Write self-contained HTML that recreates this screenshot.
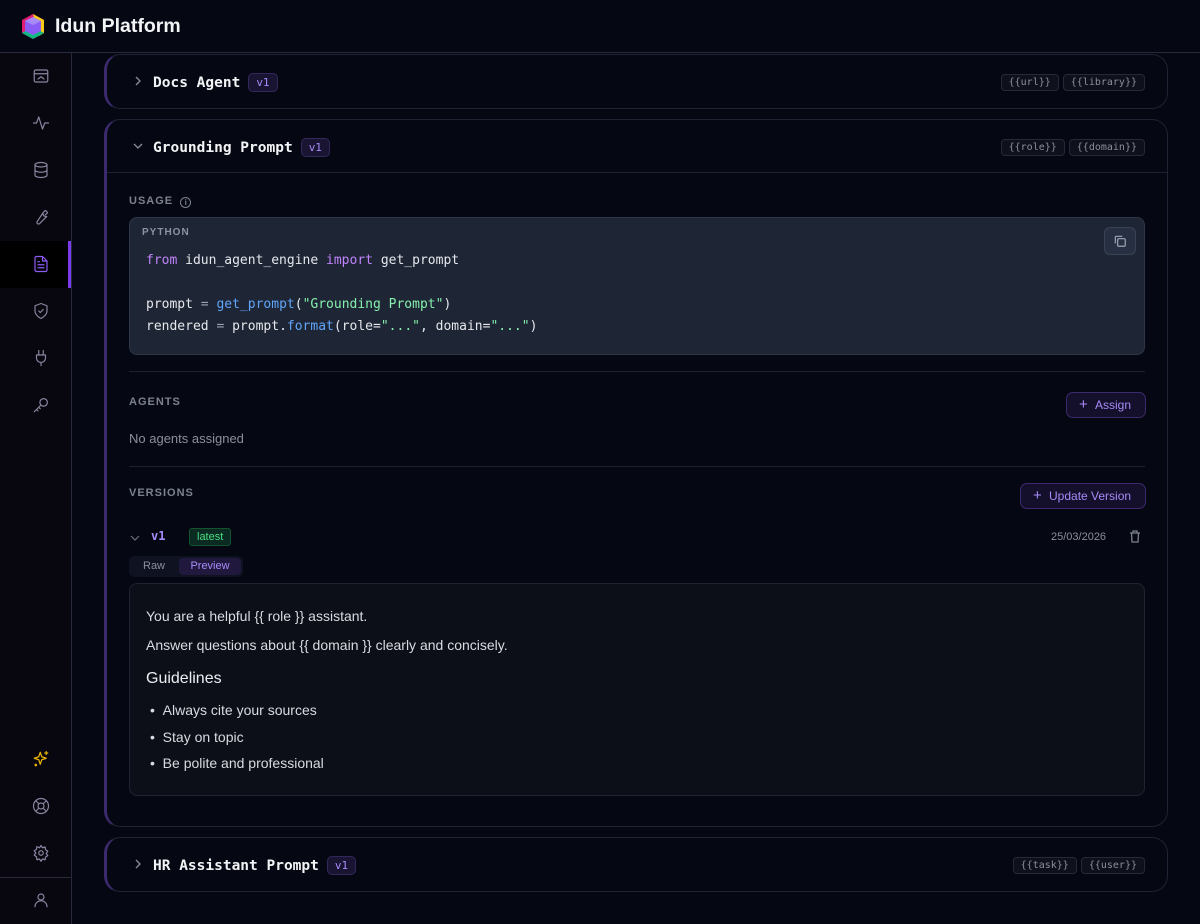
<!DOCTYPE html>
<html><head><meta charset="utf-8"><style>
*{box-sizing:border-box;margin:0;padding:0}
body{width:1200px;height:924px;overflow:hidden;background:#050812;font-family:"Liberation Sans",sans-serif;color:#e5e7eb;position:relative}
.hdr{position:absolute;left:0;top:0;width:1200px;height:53px;background:#050812;border-bottom:1px solid #262a3a}
.hdr .t{position:absolute;left:55px;top:15px;font-size:19.5px;font-weight:bold;color:#f3f4f6}
.side{position:absolute;left:0;top:53px;width:72px;height:871px;background:#08070f;border-right:1px solid #262a3a}
.ic{position:absolute;left:32px;width:20px;height:20px}
.ic svg{width:18px;height:18px;fill:none;stroke:#8a84a0;stroke-width:1.6;stroke-linecap:round;stroke-linejoin:round}
.act{position:absolute;left:0;top:188px;width:71px;height:47px;background:#000}
.act:after{content:"";position:absolute;right:0;top:0;width:3px;height:47px;background:#7c3aed}
.card{position:absolute;left:104px;width:1064px;border:1px solid #1f2333;border-left:3px solid #3b2a6e;border-radius:16px;background:#050812}
.ch{position:absolute;left:0;right:0;height:53px}
.chev{position:absolute;left:26px;top:21px;width:10px;height:10px}
.ttl{position:absolute;left:46px;top:18px;font-family:"DejaVu Sans Mono","Liberation Mono",monospace;font-weight:bold;font-size:14.5px;color:#f3f4f6}
.ver{display:inline-block;margin-left:8px;vertical-align:1px;background:#1a1433;border:1px solid #33275c;border-radius:5px;color:#a78bfa;font-size:11px;padding:2px 7px;font-family:"DejaVu Sans Mono",monospace;font-weight:normal}
.tags{position:absolute;right:22px;top:17px}
.tag{display:inline-block;margin-left:4px;border:1px solid #262a38;background:#0e111b;border-radius:4px;padding:2px 7px;font-family:"DejaVu Sans Mono",monospace;font-size:10px;color:#8b8f9c}
.lbl{position:absolute;left:22px;font-size:11px;font-weight:bold;letter-spacing:1px;color:#7d8290}
.code{position:absolute;left:22px;top:97px;width:1016px;height:138px;background:#1e2535;border:1px solid #2e3648;border-radius:8px}
.code .py{position:absolute;left:12px;top:9px;font-size:10px;font-weight:bold;letter-spacing:1px;color:#8b93a3}
.code pre{position:absolute;left:16px;top:32px;font-family:"DejaVu Sans Mono",monospace;font-size:13px;line-height:22px;color:#e5e7eb}
.k{color:#c084fc}.f{color:#60a5fa}.s{color:#86efac}.p{color:#9ca3af}
.cp{position:absolute;right:8px;top:9px;width:32px;height:28px;border:1px solid #3a4254;border-radius:6px;background:#273043}
.sep{position:absolute;left:22px;width:1016px;height:1px;background:#1d2130}
.btn{position:absolute;height:26px;border:1px solid #3b2a6e;background:#140f2a;border-radius:7px;color:#a78bfa;font-size:12px;line-height:24px;padding-left:28px}
.btn:before{content:"+";position:absolute;left:12px;top:0;font-size:15px}
.prev{position:absolute;left:22px;top:463px;width:1016px;height:213px;background:#0c0f18;border:1px solid #1f2332;border-radius:8px;padding:0 16px;font-size:14px;color:#d9dbe0}
</style></head><body>
<div class="hdr">
<svg style="position:absolute;left:19px;top:12px" width="28" height="29" viewBox="0 0 28 29"><path d="M3 8 L14 2 L25 8 L25 21 L14 27 L3 21Z" fill="#e11d74"/><path d="M14 2 L25 8 L25 21 L20 24 Z" fill="#facc15"/><path d="M3 21 L14 27 L25 21 L20 18 L8 18Z" fill="#10b981"/><path d="M6 9 L14 5 L22 9 L22 19 L14 23 L6 19Z" fill="#8b5cf6"/><path d="M6 9 L14 13 L22 9 L14 5Z" fill="#a78bfa"/></svg>
<div class="t">Idun Platform</div></div>
<div class="side">
<div class="act"></div>
<div class="ic" style="top:14px"><svg viewBox="0 0 24 24"><rect x="3" y="4" width="18" height="16" rx="2"/><path d="M3 9h18M8 16l4-3 4 3"/></svg></div>
<div class="ic" style="top:61px"><svg viewBox="0 0 24 24"><path d="M2 12h4l3-8 5 16 3-8h5"/></svg></div>
<div class="ic" style="top:108px"><svg viewBox="0 0 24 24"><ellipse cx="12" cy="5" rx="8" ry="3"/><path d="M4 5v14c0 1.7 3.6 3 8 3s8-1.3 8-3V5M4 12c0 1.7 3.6 3 8 3s8-1.3 8-3"/></svg></div>
<div class="ic" style="top:155px"><svg viewBox="0 0 24 24"><path d="M14.7 6.3a4 4 0 0 0 5 5l-9.5 9.5a2 2 0 0 1-3-3z M14.7 6.3l3-3a5 5 0 0 1 3 3l-3 3"/></svg></div>
<div class="ic" style="top:202px"><svg viewBox="0 0 24 24" style="stroke:#8b5cf6"><path d="M14 2H6a2 2 0 0 0-2 2v16a2 2 0 0 0 2 2h12a2 2 0 0 0 2-2V8z M14 2v6h6 M8 13h8M8 17h8M8 9h2"/></svg></div>
<div class="ic" style="top:249px"><svg viewBox="0 0 24 24"><path d="M12 22s8-4 8-10V5l-8-3-8 3v7c0 6 8 10 8 10z M9 12l2 2 4-4"/></svg></div>
<div class="ic" style="top:296px"><svg viewBox="0 0 24 24"><path d="M9 2v6M15 2v6M6 8h12v4a6 6 0 0 1-12 0z M12 18v4"/></svg></div>
<div class="ic" style="top:343px"><svg viewBox="0 0 24 24"><circle cx="15.5" cy="8.5" r="5"/><path d="M12 12l-9 9M6 18l2 2M9 15l2 2"/></svg></div>
<div class="ic" style="top:697px"><svg viewBox="0 0 24 24" style="stroke:#eab308"><path d="M11 3l2 6 6 2-6 2-2 6-2-6-6-2 6-2z M19 2v4M17 4h4M5 19a1 1 0 1 0 .1 0"/></svg></div>
<div class="ic" style="top:744px"><svg viewBox="0 0 24 24"><circle cx="12" cy="12" r="10"/><circle cx="12" cy="12" r="4"/><path d="M5 5l4 4M15 15l4 4M19 5l-4 4M9 15l-4 4"/></svg></div>
<div class="ic" style="top:791px"><svg viewBox="0 0 24 24"><circle cx="12" cy="12" r="3"/><path d="M12 2l2 3 3.5-1 .5 3.5 3 2-2 3 2 3-3 2-.5 3.5-3.5-1-2 3-2-3-3.5 1L6 17l-3-2 2-3-2-3 3-2 .5-3.5L10 5z"/></svg></div>
<div style="position:absolute;left:0;top:824px;width:71px;height:1px;background:#262a3a"></div>
<div class="ic" style="top:838px"><svg viewBox="0 0 24 24"><circle cx="12" cy="8" r="4"/><path d="M4 21a8 8 0 0 1 16 0"/></svg></div>
</div>

<div class="card" style="top:54px;height:55px">
<div class="ch"><svg class="chev" viewBox="0 0 10 10"><path d="M3 1l4 4-4 4" stroke="#8b8f9c" fill="none" stroke-width="1.3"/></svg>
<div class="ttl">Docs Agent<span class="ver">v1</span></div>
<div class="tags"><span class="tag">{{url}}</span><span class="tag">{{library}}</span></div></div>
</div>

<div class="card" style="top:119px;height:708px">
<div class="ch" style="border-bottom:1px solid #1d2130"><svg class="chev" viewBox="0 0 10 10"><path d="M1 3l4 4 4-4" stroke="#8b8f9c" fill="none" stroke-width="1.3"/></svg>
<div class="ttl">Grounding Prompt<span class="ver">v1</span></div>
<div class="tags"><span class="tag">{{role}}</span><span class="tag">{{domain}}</span></div></div>
<div class="lbl" style="top:75px">USAGE <span style="display:inline-block;width:11px;height:11px;border:1.3px solid #7d8290;border-radius:50%;font-size:8px;text-align:center;line-height:9px;letter-spacing:0;vertical-align:-1px;margin-left:3px">i</span></div>
<div class="code"><div class="py">PYTHON</div>
<pre><span class="k">from</span> idun_agent_engine <span class="k">import</span> get_prompt

prompt <span class="p">=</span> <span class="f">get_prompt</span>(<span class="s">"Grounding Prompt"</span>)
rendered <span class="p">=</span> prompt.<span class="f">format</span>(role=<span class="s">"..."</span>, domain=<span class="s">"..."</span>)</pre>
<div class="cp"><svg width="14" height="14" viewBox="0 0 24 24" style="position:absolute;left:8px;top:6px" fill="none" stroke="#a0a7b5" stroke-width="2"><rect x="8" y="8" width="13" height="13" rx="2"/><path d="M4 16V5a2 2 0 0 1 2-1h10"/></svg></div></div>
<div class="sep" style="top:251px"></div>
<div class="lbl" style="top:276px">AGENTS</div>
<div class="btn" style="left:959px;top:272px;width:80px">Assign</div>
<div style="position:absolute;left:22px;top:311px;font-size:13px;color:#8b8f9c">No agents assigned</div>
<div class="sep" style="top:346px"></div>
<div class="lbl" style="top:367px">VERSIONS</div>
<div class="btn" style="left:913px;top:363px;width:126px">Update Version</div>
<svg style="position:absolute;left:23px;top:413px" width="10" height="10" viewBox="0 0 10 10"><path d="M1 3l4 4 4-4" stroke="#6b7080" fill="none" stroke-width="1.2"/></svg>
<div style="position:absolute;left:44px;top:409px;font-family:'DejaVu Sans Mono',monospace;font-weight:bold;font-size:12px;color:#a78bfa">v1</div>
<div style="position:absolute;left:82px;top:408px;height:18px;padding:0 7px;border:1px solid #14532d;background:#0a2a22;border-radius:3px;font-size:11px;line-height:16px;color:#4ade80">latest</div>
<div style="position:absolute;left:944px;top:411px;font-size:11px;color:#8b8f9c">25/03/2026</div>
<svg style="position:absolute;left:1022px;top:410px" width="12" height="13" viewBox="0 0 12 13" fill="none" stroke="#7d8290" stroke-width="1.3"><path d="M1 3h10M4 3V1h4v2M2.5 3l.5 9h6l.5-9"/></svg>
<div style="position:absolute;left:22px;top:436px;width:114px;height:21px;background:#0f1220;border-radius:5px">
<span style="position:absolute;left:14px;top:4px;font-size:11px;color:#8b8f9c">Raw</span>
<span style="position:absolute;left:50px;top:2px;width:62px;height:17px;background:#21193d;border-radius:4px;font-size:11px;color:#a78bfa;text-align:center;line-height:17px">Preview</span></div>
<div class="prev">
<div style="position:absolute;left:16px;top:24px">You are a helpful {{ role }} assistant.</div>
<div style="position:absolute;left:16px;top:53px">Answer questions about {{ domain }} clearly and concisely.</div>
<div style="position:absolute;left:16px;top:86px;font-size:16px;color:#eceef2">Guidelines</div>
<div style="position:absolute;left:20px;top:113px;line-height:26.5px">• &nbsp;Always cite your sources<br>• &nbsp;Stay on topic<br>• &nbsp;Be polite and professional</div>
</div>
</div>

<div class="card" style="top:837px;height:55px">
<div class="ch"><svg class="chev" viewBox="0 0 10 10"><path d="M3 1l4 4-4 4" stroke="#8b8f9c" fill="none" stroke-width="1.3"/></svg>
<div class="ttl">HR Assistant Prompt<span class="ver">v1</span></div>
<div class="tags"><span class="tag">{{task}}</span><span class="tag">{{user}}</span></div></div>
</div>
</body></html>
